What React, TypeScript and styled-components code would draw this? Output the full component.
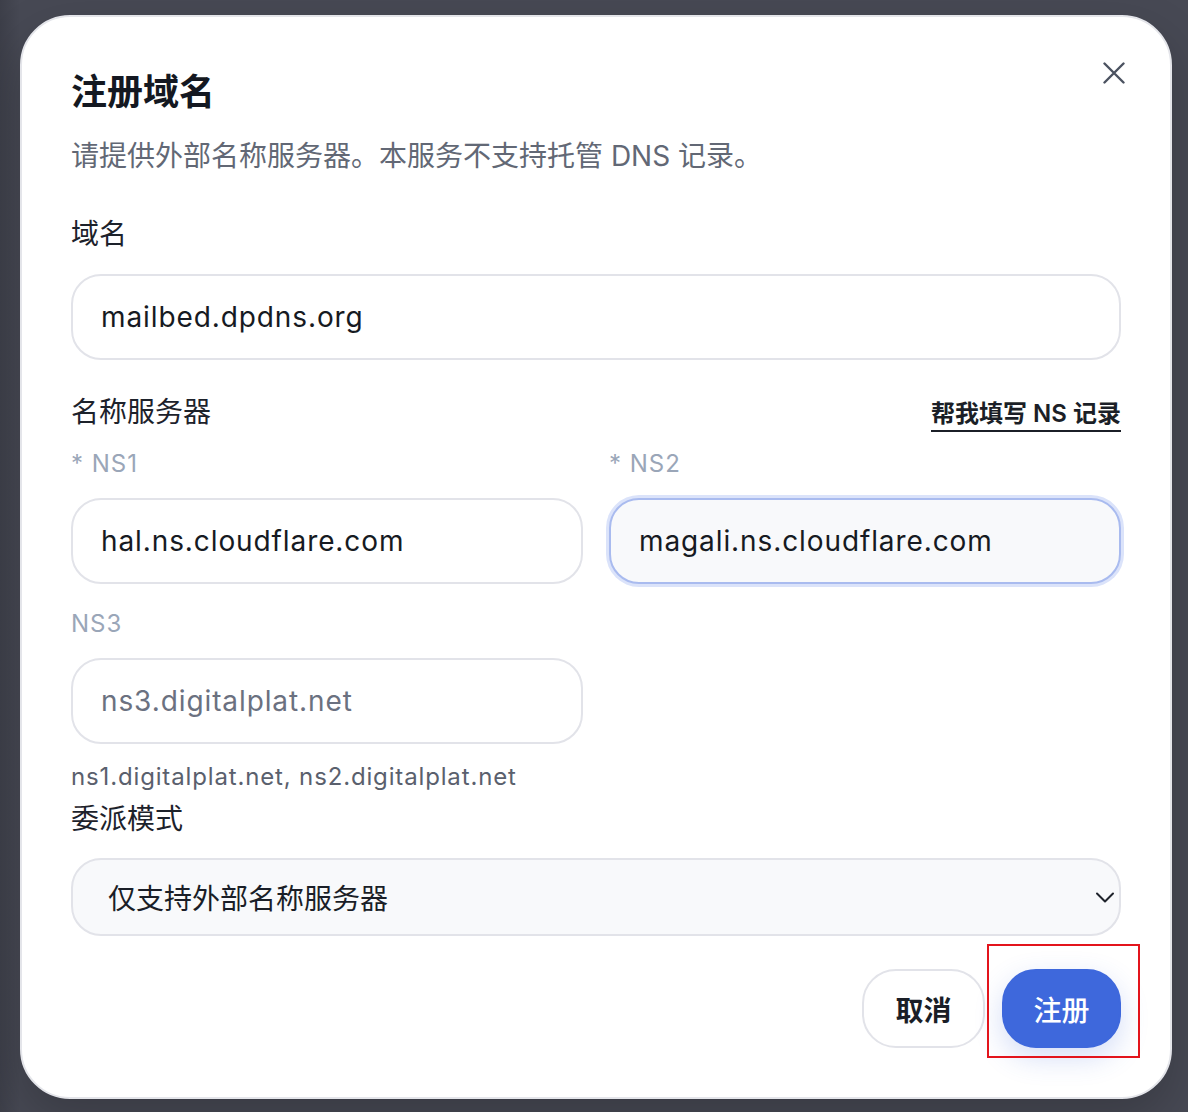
import React from "react";
import styled, { createGlobalStyle } from "styled-components";

const Global = createGlobalStyle`
  html, body { margin: 0; padding: 0; }
  body {
    background: #474954;
    font-family: Inter, "Noto Sans CJK SC", sans-serif;
    -webkit-font-smoothing: antialiased;
  }
  * { box-sizing: border-box; }
`;

const Backdrop = styled.div`
  width: 1188px;
  height: 1112px;
  padding: 15px 16px 13px 20px;
  background:
    linear-gradient(90deg, rgba(30,32,40,0.25) 0px, rgba(30,32,40,0) 20px),
    #474954;
  overflow: hidden;
`;

const Dialog = styled.div`
  position: relative;
  width: 1152px;
  height: 1084px;
  background: #fff;
  border: 2px solid #e4e5ea;
  border-radius: 50px;
  padding: 55px 49px 49px 49px;
  display: flex;
  flex-direction: column;
  box-shadow: 0 20px 50px rgba(0, 0, 0, 0.2);
`;

const Title = styled.h2`
  margin: 0;
  font-size: 36px;
  line-height: 40px;
  font-weight: 700;
  color: #141821;
`;

const Subtitle = styled.p`
  margin: 26px 0 0;
  font-size: 28px;
  line-height: 36px;
  color: #626875;
`;

const CloseButton = styled.button`
  position: absolute;
  top: 38px;
  right: 38px;
  width: 36px;
  height: 36px;
  border: none;
  background: transparent;
  padding: 0;
  display: flex;
  align-items: center;
  justify-content: center;
  color: #4b5260;
  cursor: pointer;
`;

const Label = styled.div<{ $mt: number }>`
  margin-top: ${(p) => p.$mt}px;
  font-size: 28px;
  line-height: 36px;
  color: #1d222b;
`;

const LabelRow = styled.div`
  margin-top: 34px;
  display: flex;
  justify-content: space-between;
  align-items: center;
  height: 36px;
`;

const HelpLink = styled.a`
  font-size: 24px;
  line-height: 30px;
  font-weight: 600;
  color: #1b1f27;
  text-decoration: none;
  border-bottom: 2px solid #1b1f27;
  padding-bottom: 1px;
  margin-top: 6px;
`;

const Grid = styled.div`
  margin-top: 18px;
  display: grid;
  grid-template-columns: 512px 512px;
  column-gap: 26px;
  row-gap: 24px;
`;

const Field = styled.div`
  display: flex;
  flex-direction: column;
  gap: 18px;
`;

const SmallLabel = styled.div`
  font-size: 24px;
  line-height: 32px;
  letter-spacing: 1px;
  color: #9aa6b8;
`;

const Input = styled.div<{ $focused?: boolean; $placeholder?: boolean }>`
  height: 86px;
  border-radius: 30px;
  border: 2px solid ${(p) => (p.$focused ? "#a9bbef" : "#e2e3e9")};
  background: ${(p) => (p.$focused ? "#f8f9fb" : "#fff")};
  box-shadow: ${(p) => (p.$focused ? "0 0 0 3px #dbe3fa" : "none")};
  padding: 0 28px;
  display: flex;
  align-items: center;
  font-size: 28px;
  letter-spacing: 0.9px;
  color: ${(p) => (p.$placeholder ? "#6b7180" : "#161a22")};
`;

const WideInput = styled(Input)`
  margin-top: 22px;
`;

const Helper = styled.div`
  margin-top: 18px;
  font-size: 24px;
  line-height: 30px;
  letter-spacing: 0.85px;
  color: #5a606d;
`;

const Select = styled.div`
  margin-top: 21px;
  height: 78px;
  border-radius: 30px;
  border: 2px solid #e2e3e9;
  background: #f8f9fb;
  padding: 0 2px 0 35px;
  display: flex;
  align-items: center;
  justify-content: space-between;
  font-size: 28px;
  color: #1a1e27;
`;

const Footer = styled.div`
  margin-top: 33px;
  display: flex;
  justify-content: flex-end;
  gap: 17px;
`;

const Button = styled.button<{ $primary?: boolean }>`
  position: relative;
  height: 79px;
  width: ${(p) => (p.$primary ? 119 : 123)}px;
  padding: 0;
  border-radius: 34px;
  font-family: Inter, "Noto Sans CJK SC", sans-serif;
  font-size: 28px;
  font-weight: ${(p) => (p.$primary ? 500 : 700)};
  border: 2px solid ${(p) => (p.$primary ? "#3e68dc" : "#e2e3e9")};
  background: ${(p) => (p.$primary ? "#3e68dc" : "#fff")};
  color: ${(p) => (p.$primary ? "#fff" : "#1a1e27")};
  box-shadow: ${(p) =>
    p.$primary ? "0 10px 28px rgba(62, 104, 220, 0.22)" : "none"};
  cursor: pointer;
`;

const Highlight = styled.span`
  position: absolute;
  left: -17px;
  top: -27px;
  width: 153px;
  height: 114px;
  border: 2px solid #e3141c;
  pointer-events: none;
`;

export default function App() {
  return (
    <>
      <Global />
      <Backdrop>
        <Dialog>
          <CloseButton aria-label="关闭">
            <svg width="22" height="22" viewBox="0 0 22 22" fill="none">
              <path
                d="M1.5 1.5L20.5 20.5M20.5 1.5L1.5 20.5"
                stroke="currentColor"
                strokeWidth="2.4"
                strokeLinecap="round"
              />
            </svg>
          </CloseButton>
          <Title>注册域名</Title>
          <Subtitle>请提供外部名称服务器。本服务不支持托管 DNS 记录。</Subtitle>

          <Label $mt={42}>域名</Label>
          <WideInput>mailbed.dpdns.org</WideInput>

          <LabelRow>
            <Label $mt={0}>名称服务器</Label>
            <HelpLink href="#">帮我填写 NS 记录</HelpLink>
          </LabelRow>

          <Grid>
            <Field>
              <SmallLabel>* NS1</SmallLabel>
              <Input>hal.ns.cloudflare.com</Input>
            </Field>
            <Field>
              <SmallLabel>* NS2</SmallLabel>
              <Input $focused>magali.ns.cloudflare.com</Input>
            </Field>
            <Field>
              <SmallLabel>NS3</SmallLabel>
              <Input $placeholder>ns3.digitalplat.net</Input>
            </Field>
          </Grid>

          <Helper>ns1.digitalplat.net, ns2.digitalplat.net</Helper>
          <Label $mt={9}>委派模式</Label>
          <Select>
            <span>仅支持外部名称服务器</span>
            <svg width="24" height="24" viewBox="0 0 24 24" fill="none">
              <path
                d="M4 8.5L12 16.5L20 8.5"
                stroke="#1f232b"
                strokeWidth="2"
                strokeLinecap="round"
                strokeLinejoin="round"
              />
            </svg>
          </Select>

          <Footer>
            <Button>取消</Button>
            <Button $primary>
              注册
              <Highlight />
            </Button>
          </Footer>
        </Dialog>
      </Backdrop>
    </>
  );
}
